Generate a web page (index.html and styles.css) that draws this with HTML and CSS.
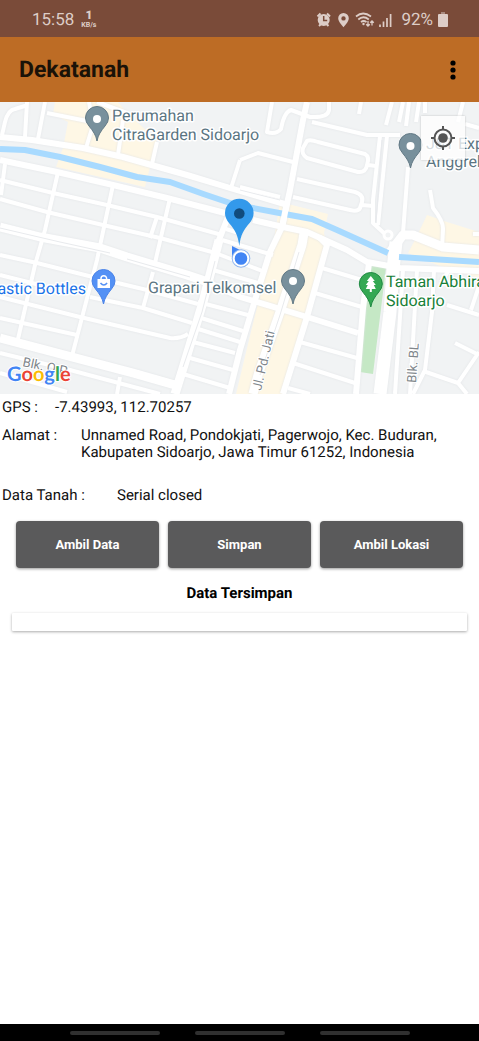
FILE: index.html
```html
<!DOCTYPE html>
<html lang="id">
<head>
<meta charset="utf-8">
<meta name="viewport" content="width=device-width, initial-scale=1">
<title>Dekatanah</title>
<link rel="stylesheet" href="styles.css">
</head>
<body>
<div class="screen">
  <div class="status">
    <span class="clock">15:58</span>
    <span class="speed"><b>1</b><span>KB/s</span></span>
    <svg class="status-icons" width="78" height="18" viewBox="316 10 78 18" aria-hidden="true">
      <path class="line" stroke-width="2" d="M317.500 15.500 l3-3 M327 12.500l3 3 M319 25l2-2 M328.500 25l-2-2"/>
      <circle class="solid" cx="323.700" cy="19" r="6"/>
      <path class="cut" d="M323.700 15v4.500h3.500"/>
      <path class="solid" fill-rule="evenodd" d="M343.500 12a5.300 5.300 0 0 0-5.300 5.300c0 3.500 5.300 9 5.300 9s5.300-5.500 5.300-9a5.300 5.300 0 0 0-5.300-5.300zm0 3.200a2.200 2.200 0 1 1 0 4.400a2.200 2.200 0 0 1 0-4.400z"/>
      <path class="line" stroke-width="1.700" d="M356 15.500q7-6 15 0M358.300 18.500q5-4.500 10.500 0M361 21.200q2.500-2.400 5.500 0"/>
      <circle class="solid" cx="363.500" cy="23" r="1.200"/>
      <path class="line" stroke-width="1.300" d="M368 20v5m-1.800-1.800l1.800 1.800l1.800-1.800M372 24.500v-4.500m-1.800 1.800l1.800-1.800l1.800 1.800"/>
      <path class="line" stroke-width="1.700" d="M380 23.500v2.500M383.500 20.500v5.500M387 17v9M390.600 13v13"/>
    </svg>
    <span class="percent">92%</span>
    <svg class="battery" width="10" height="15" viewBox="0 0 10 15" aria-hidden="true"><path class="solid" d="M1 2h8q1 0 1 1v11q0 1-1 1h-8q-1 0-1-1v-11q0-1 1-1z"/><path class="cap" d="M3 0h4v2h-4z"/></svg>
  </div>

  <header class="appbar">
    <h1>Dekatanah</h1>
    <button class="more" type="button" aria-label="Menu"><svg width="6" height="20" viewBox="0 0 6 20"><circle cx="3" cy="3" r="2.600"/><circle cx="3" cy="10" r="2.600"/><circle cx="3" cy="17" r="2.600"/></svg></button>
  </header>

  <div class="map">
    <svg class="map-canvas" viewBox="0 102 479 292" preserveAspectRatio="xMidYMid slice" role="img" aria-label="Peta">
      <g class="district">
        <path d="M55 102H118L127 113L157 140L145 187L56 167L63 148L68 122L53 114z"/>
        <path d="M280 202L328 214L324 233L327 245L303 325L283 394H236L255 315L273 245z"/>
        <path d="M427 215L447 222L479 232V278L440 266L408 253L415 240z"/>
      </g>
      <path class="park" d="M369 262L386 268L373 374L360 372z"/>
      <g class="roads">
        <g class="r3">
          <path d="M2 135L5 122Q8 110 15 109L28 105M27 102L25 137M45 102L38 139M47 113L87 121M89 102L93 125L86 148M97 102L127 113M123 120L118 155M157 142L152 164M240 160L231 188"/>
          <path d="M5 164L1 195M58 172L45 230L35 265L18 339M113 185L97 260L72 356M170 198L158 250L155 263M157 217L150 238M153 272L143 308M120 377L117 394"/>
          <path d="M0 180L53 193L107 205L157 217L222 235M0 199L47 212L103 225L160 238L212 252M0 255L37 263L97 278L147 290L198 304M0 275L40 285M90 297L143 308L192 323M0 297L80 317L170 338Q180 339 188 334M0 318L77 335M0 353L70 370L130 386L160 394M0 373L67 392"/>
          <path d="M226 229L242 234M222 240L273 255M218 254L265 272M213 270L258 283M198 302L248 315M198 317L243 331M195 328L240 342M193 342L235 353M190 358L233 370M183 368V374L230 388"/>
          <path d="M240 187L280 197M240 160L258 153L293 162M272 102L267 132Q276 135 281 129Q284 112 291 110L310 117Q328 118 329 110V102M312 122L367 135H400"/>
          <path d="M307 141Q310 139 318 142L365 154Q370 157 367 165Q366 173 358 172L307 158Q301 154 303 148zM368 165L376 166M297 179L355 192Q364 195 362 202L360 208Q358 212 350 210L293 197M362 205L373 206"/>
          <path d="M380 136L373 200V223L386 235M387 136L378 225M408 167L403 233M361 102L359 114M392 102L386 125M403 102L399 122M409 102L406 126M419 102L416 122M425 102L425 113M463 102L458 122M465 124L479 128"/>
          <path d="M430 190L433 208Q444 222 443 230L442 248M473 234H479M322 268L362 280M315 293L362 307M300 342L357 358M293 363L355 383M288 388L310 394"/>
          <path d="M403 270L395 394M417 270L410 394M434 270L432 312L425 370L413 394M426 372L458 383L467 394M458 383L479 352M455 343L479 355M447 305L479 315M479 286L471 310M450 269L441 282"/>
        </g>
        <g class="r5">
          <path d="M0 137L32 140L83 148L123 157L187 175L240 191L288 205M0 160L57 172L113 185L167 198L225 213M253 220L283 227L307 232L347 250L367 262L400 268L479 271"/>
          <path d="M307 102L303 120L290 190L282 227L270 252L258 290L240 350L229 394M319 237L327 245L307 317L283 394M369 263L363 308L356 394M228 217L215 250M207 282L240 297L307 317L358 333"/>
        </g>
        <g class="r8">
          <path d="M0 227L40 237L100 248L127 257L187 275L211 283M0 338L72 357L133 373L175 385M219 240L203 302L184 365L175 394M304 233L302 245L280 312L258 375L253 394M390 252L403 235H413L443 247L479 250"/>
        </g>
        <path class="r13" d="M396 242L393 270L390 312L380 394"/>
      </g>
      <path class="river" d="M0 149L25 150L60 157L100 167L137 177L170 182Q205 195 239 206L253 208L290 215L312 219L337 230L388 253M399 257L479 262"/>
      <path class="bridge" d="M287 202L282 228"/>
      <circle class="roundabout" cx="388" cy="235" r="4"/>
      <path class="median" d="M0 228L60 242L110 253M127 259L190 277M215 261L202 312L183 367M299 252L280 315L260 375M382 140L376 223M240 190L280 200"/>

      <g class="labels gray">
        <text x="112" y="121">Perumahan</text><text x="112" y="140">CitraGarden Sidoarjo</text>
        <text x="148" y="293">Grapari Telkomsel</text>
        <text x="426" y="149">J&amp;T Express</text><text x="426" y="167">Anggrek</text>
      </g>
      <text class="labels blue" x="86" y="294" text-anchor="end">Plastic Bottles</text>
      <g class="labels green"><text x="386" y="287">Taman Abhirama</text><text x="386" y="306">Sidoarjo</text></g>
      <g class="street">
        <text transform="translate(261 391) rotate(-77)">Jl. Pd. Jati</text>
        <text transform="translate(416 383) rotate(-86)">Blk. BL</text>
        <text transform="translate(22 366) rotate(12)">Blk. O-P</text>
      </g>

      <defs><path id="pin" d="M0 0C-1-6-4-10-8-15Q-11.500-19-11.500-23A11.500 11.500 0 0 1 11.500-23Q11.500-19 8-15C4-10 1-6 0 0z"/></defs>
      <use class="poi gray-pin" href="#pin" x="97" y="141"/><circle class="white" cx="97" cy="119" r="4"/>
      <use class="poi gray-pin" href="#pin" x="293" y="304"/><circle class="white" cx="293" cy="281" r="4"/>
      <use class="poi gray-pin" href="#pin" x="410.500" y="168"/><circle class="white" cx="410.500" cy="146" r="4"/>
      <use class="poi blue-pin" href="#pin" x="103.500" y="304"/>
      <path class="white" d="M97.500 279H110V288H97.500z"/><path class="bag" d="M101 280v-1.500a2.800 2.800 0 0 1 5.600 0v1.500"/><path class="smile" d="M100.500 283q3.300 4 6.600 0"/>
      <use class="poi green-pin" href="#pin" x="370.800" y="307"/>
      <path class="white" d="M370.800 276l4 5h-2l3 4h-2l2 4h-4v3h-2v-3h-4l2-4h-2l3-4h-2z"/>

      <path class="heading" d="M232 246l8 4l-8 7z"/>
      <circle class="halo" cx="241" cy="258.500" r="9.300"/>
      <circle class="dot" cx="241" cy="258.500" r="7.300"/>
      <path class="marker" d="M239.300 246C238 235 235 230 229 223Q225 218 225 213a14.300 14.300 0 0 1 28.600 0Q253.600 218 249.600 223C243.600 230 240.600 235 239.300 246z"/>
      <circle class="marker-eye" cx="239.300" cy="213.500" r="5.300"/>

      <text class="google" x="7" y="381"><tspan class="g-blue">G</tspan><tspan class="g-red">o</tspan><tspan class="g-yellow">o</tspan><tspan class="g-blue">g</tspan><tspan class="g-green">l</tspan><tspan class="g-red">e</tspan></text>
    </svg>
    <button class="locate" type="button" aria-label="Lokasi saya"><svg width="26" height="26" viewBox="0 0 26 26"><circle cx="13" cy="13" r="4.800"/><circle class="ring" cx="13" cy="13" r="8.500"/><path class="ring" d="M13 1v4M13 21v4M1 13h4M21 13h4"/></svg></button>
  </div>

  <main>
    <dl class="info">
      <div class="row gps"><dt>GPS :</dt><dd>-7.43993, 112.70257</dd></div>
      <div class="row address"><dt>Alamat :</dt><dd>Unnamed Road, Pondokjati, Pagerwojo, Kec. Buduran, Kabupaten Sidoarjo, Jawa Timur 61252, Indonesia</dd></div>
      <div class="row soil"><dt>Data Tanah :</dt><dd>Serial closed</dd></div>
    </dl>
    <div class="actions">
      <button type="button">Ambil Data</button>
      <button type="button">Simpan</button>
      <button type="button">Ambil Lokasi</button>
    </div>
    <h2>Data Tersimpan</h2>
    <div class="saved"></div>
  </main>

  <div class="navbar"><span></span><span></span><span></span></div>
</div>
</body>
</html>
```
FILE: styles.css
```css
* { box-sizing: border-box; }
body { margin: 0; background: #fff; color: #111; font: 15px/18px Roboto, sans-serif; text-rendering: geometricPrecision; }
button { font-family: inherit; border: 0; padding: 0; }
.screen { min-height: 100vh; display: flex; flex-direction: column; }

.status { height: 37px; padding: 2px 31px 0 32px; display: flex; align-items: center; background: #7a4b39; color: #ddcdc7; font-size: 17px; }
.speed { display: flex; flex-direction: column; align-items: center; margin-left: 7px; font-size: 7px; line-height: 8px; font-weight: 700; }
.speed b { font-size: 12px; line-height: 11px; }
.status-icons { margin-left: auto; }
.percent { margin: 0 5px 0 7px; }
.solid { fill: #ddcdc7; }
.cap { fill: #a98a7f; }
.line { fill: none; stroke: #ddcdc7; }
.cut { fill: none; stroke: #7a4b39; stroke-width: 1.5; }

.appbar { height: 65px; padding: 1px 16px 0 19px; display: flex; align-items: center; justify-content: space-between; background: #bd6c25; }
.appbar h1 { margin: 0; font-size: 23px; line-height: 28px; font-weight: 700; color: #1a1208; }
.more { width: 20px; height: 40px; background: none; display: flex; align-items: center; justify-content: center; }

.map { position: relative; height: 292px; overflow: hidden; background: #f1f3f4; }
.map-canvas { display: block; width: 100%; height: 100%; }
.district { fill: #fef7e5; }
.park { fill: #c5e8c5; }
.roads { fill: none; stroke: #fff; stroke-linejoin: round; filter: drop-shadow(0 0 1px #e2e4e7); }
.r3 { stroke-width: 4; }
.r5 { stroke-width: 6; }
.r8 { stroke-width: 9; }
.r13 { stroke-width: 13; }
.river { fill: none; stroke: #a8daff; stroke-width: 6; stroke-linejoin: round; }
.bridge { fill: none; stroke: #fff; stroke-width: 6; }
.roundabout { fill: #f1f3f4; stroke: #fff; stroke-width: 3; }
.median { fill: none; stroke: #e8eaed; stroke-width: 1; }
.labels { font-size: 16px; stroke: #fff; stroke-width: 3px; stroke-linejoin: round; paint-order: stroke; }
.gray { fill: #5b7582; }
.blue { fill: #1a73e8; }
.green { fill: #188038; }
.street { font-size: 13px; fill: #80868b; stroke: #fff; stroke-width: 2px; paint-order: stroke; }
.poi { stroke-width: 1; }
.gray-pin { fill: #78909c; stroke: #627985; }
.blue-pin { fill: #5491f5; stroke: #4a83e8; }
.green-pin { fill: #34a853; stroke: #208a43; }
.white { fill: #fff; }
.bag { fill: none; stroke: #fff; stroke-width: 1.5; }
.smile { fill: none; stroke: #5491f5; stroke-width: 1.5; }
.heading { fill: #4285f4; }
.halo { fill: #8fb5ef; }
.dot { fill: #4285f4; stroke: #fff; stroke-width: 2; }
.marker { fill: #3399eb; }
.marker-eye { fill: #114b7d; }
.google { font: 700 20px Lato, sans-serif; stroke: #fff; stroke-width: 2px; paint-order: stroke; }
.g-blue { fill: #4285f4; }
.g-red { fill: #ea4335; }
.g-yellow { fill: #fbbc04; }
.g-green { fill: #34a853; }
.locate { position: absolute; top: 14px; right: 14px; width: 44px; height: 44px; display: grid; place-items: center; background: #ffffffbf; box-shadow: 0 0 2px #0003; }
.locate svg { fill: #555; }
.locate .ring { fill: none; stroke: #555; stroke-width: 2; }

main { flex: 1; }
.info { margin: 0; padding: 4px 3px 0 2px; }
.row { display: flex; }
.row dd { margin: 0; flex: 1; }
.gps dt { width: 53px; }
.address { margin-top: 11px; line-height: 17px; }
.address dt { width: 79px; }
.address dd { padding-right: 32px; }
.soil { margin-top: 25px; }
.soil dt { width: 115px; }
.actions { display: flex; gap: 9px; padding: 17px 16px 0; }
.actions button { flex: 1; height: 47px; border-radius: 4px; background: #5a5a5b; color: #fff; font-size: 13px; font-weight: 700; box-shadow: 0 1px 3px #0006; }
h2 { margin: 16px 0 11px; text-align: center; font-size: 15px; line-height: 18px; font-weight: 700; color: #000; }
.saved { height: 18px; margin: 0 12px; border-radius: 1px; background: #fff; box-shadow: 0 1px 3px #0005; }

.navbar { height: 17px; display: flex; align-items: center; justify-content: center; gap: 35px; background: #000; }
.navbar span { width: 90px; height: 4px; border-radius: 2px; background: #303030; }
```
